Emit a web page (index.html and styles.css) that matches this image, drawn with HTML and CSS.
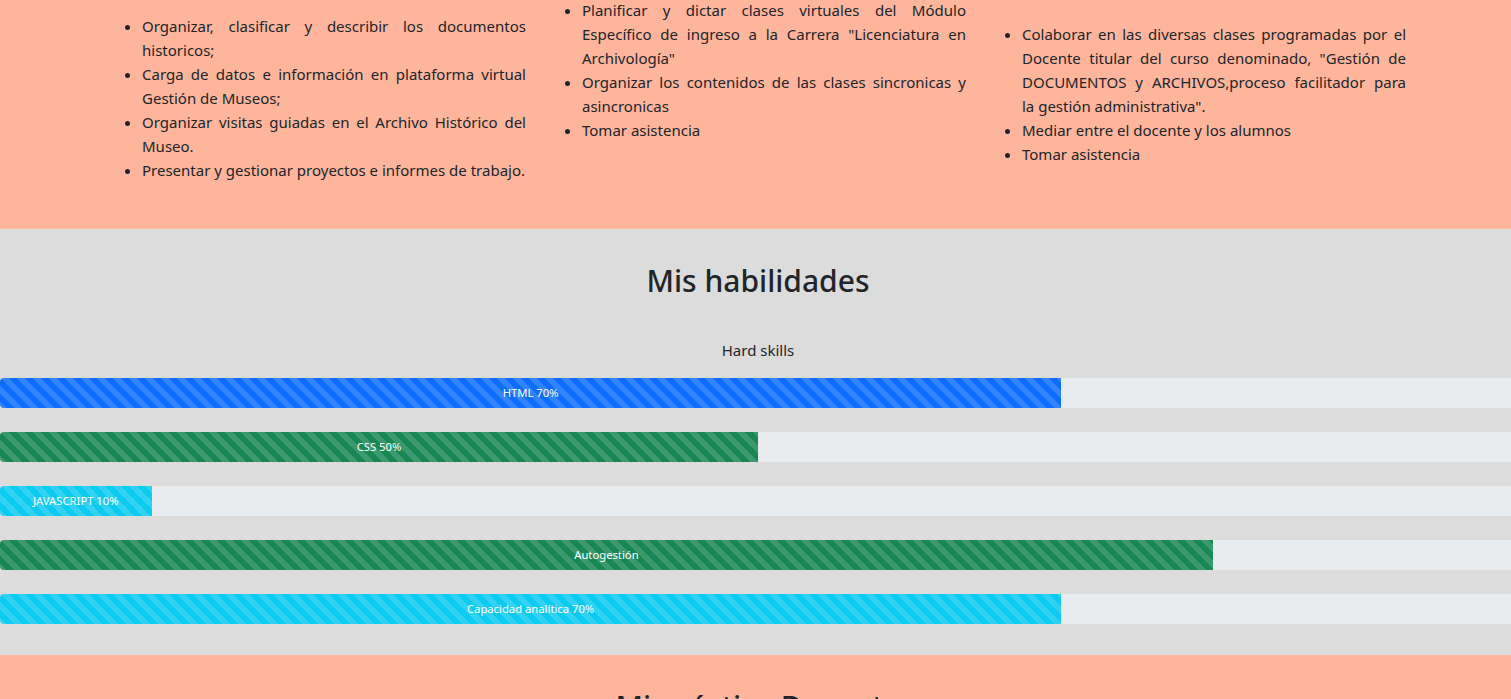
FILE: index.html
```html
<!DOCTYPE html>
<html lang="es">
<head>
<meta charset="utf-8">
<title>Portfolio</title>
<link rel="stylesheet" href="styles.css">
</head>
<body>
<div class="page">
  <section class="experience">
    <div class="container">
      <div class="row">
        <div class="col col-a">
          <ul class="tasks">
            <li>Organizar, clasificar y describir los documentos historicos;</li>
            <li>Carga de datos e información en plataforma virtual Gestión de Museos;</li>
            <li>Organizar visitas guiadas en el Archivo Histórico del Museo.</li>
            <li>Presentar y gestionar proyectos e informes de trabajo.</li>
          </ul>
        </div>
        <div class="col col-b">
          <ul class="tasks">
            <li>Planificar y dictar clases virtuales del Módulo Específico de ingreso a la Carrera "Licenciatura en Archivología"</li>
            <li>Organizar los contenidos de las clases sincronicas y asincronicas</li>
            <li>Tomar asistencia</li>
          </ul>
        </div>
        <div class="col col-c">
          <ul class="tasks">
            <li>Colaborar en las diversas clases programadas por el Docente titular del curso denominado, "Gestión de DOCUMENTOS y ARCHIVOS,proceso facilitador para la&nbsp;gestión administrativa".</li>
            <li>Mediar entre el docente y los alumnos</li>
            <li>Tomar asistencia</li>
          </ul>
        </div>
      </div>
    </div>
  </section>

  <section class="skills">
    <h2 class="section-title">Mis habilidades</h2>
    <p class="skills-sub">Hard skills</p>
    <div class="bars">
      <div class="progress"><div class="progress-bar bar-primary" style="width:70%">HTML 70%</div></div>
      <div class="progress"><div class="progress-bar bar-success" style="width:50%">CSS 50%</div></div>
      <div class="progress"><div class="progress-bar bar-info" style="width:10%">JAVASCRIPT 10%</div></div>
      <div class="progress"><div class="progress-bar bar-success" style="width:80%">Autogestión</div></div>
      <div class="progress"><div class="progress-bar bar-info" style="width:70%">Capacidad analítica 70%</div></div>
    </div>
  </section>

  <section class="teaching">
    <h2 class="section-title">Mi práctica Docente</h2>
    <p class="teaching-text">&nbsp;</p>
  </section>
</div>
</body>
</html>
```
FILE: styles.css
```css
html, body {
  margin: 0;
  padding: 0;
}
body {
  overflow-x: hidden;
  font-family: "Noto Sans", "Open Sans", sans-serif;
  font-size: 15px;
  line-height: 24px;
  color: #212529;
  background: #ffb59c;
}
.page {
  width: 1516px;
}

/* experience section */
.experience {
  background: #ffb59c;
  padding: 0 0 31px;
}
.container {
  width: 1320px;
  margin: 0 auto;
  padding: 0 12px;
  box-sizing: border-box;
}
.row {
  display: flex;
  align-items: flex-start;
  margin: 0 -12px;
}
.col {
  flex: 0 0 440px;
  box-sizing: border-box;
  padding: 0 12px;
}
.tasks {
  margin: 0 0 16px;
  padding-left: 32px;
  text-align: justify;
}
.col-a .tasks { margin-top: 14px; }
.col-b .tasks { margin-top: -2px; }
.col-c .tasks { margin-top: 22px; }

/* skills section */
.skills {
  background: #dcdcdc;
  padding: 34px 0 31px;
  text-align: center;
}
.section-title {
  margin: 0;
  font-size: 30px;
  font-weight: 500;
  line-height: 36px;
  color: #212529;
}
.skills-sub {
  margin: 39px 0 16px;
}
.bars {
  display: flex;
  flex-direction: column;
  gap: 24px;
}
.progress {
  display: flex;
  height: 30px;
  overflow: hidden;
  background: #e9ecef;
  border-radius: 4px;
}
.progress-bar {
  display: flex;
  flex-direction: column;
  justify-content: center;
  overflow: hidden;
  white-space: nowrap;
  text-align: center;
  color: #fff;
  font-size: 11.25px;
  line-height: 1.5;
  padding-top: 1px;
  box-sizing: border-box;
  background-image: linear-gradient(45deg, rgba(255,255,255,.15) 25%, transparent 25%, transparent 50%, rgba(255,255,255,.15) 50%, rgba(255,255,255,.15) 75%, transparent 75%, transparent);
  background-size: 16px 16px;
}
.bar-primary { background-color: #0d6efd; }
.bar-success { background-color: #198754; }
.bar-info { background-color: #0dcaf0; }

/* teaching section */
.teaching {
  background: #ffb59c;
  padding: 34px 0 40px;
  text-align: center;
}
.teaching-text {
  margin: 16px 0 0;
}
```
